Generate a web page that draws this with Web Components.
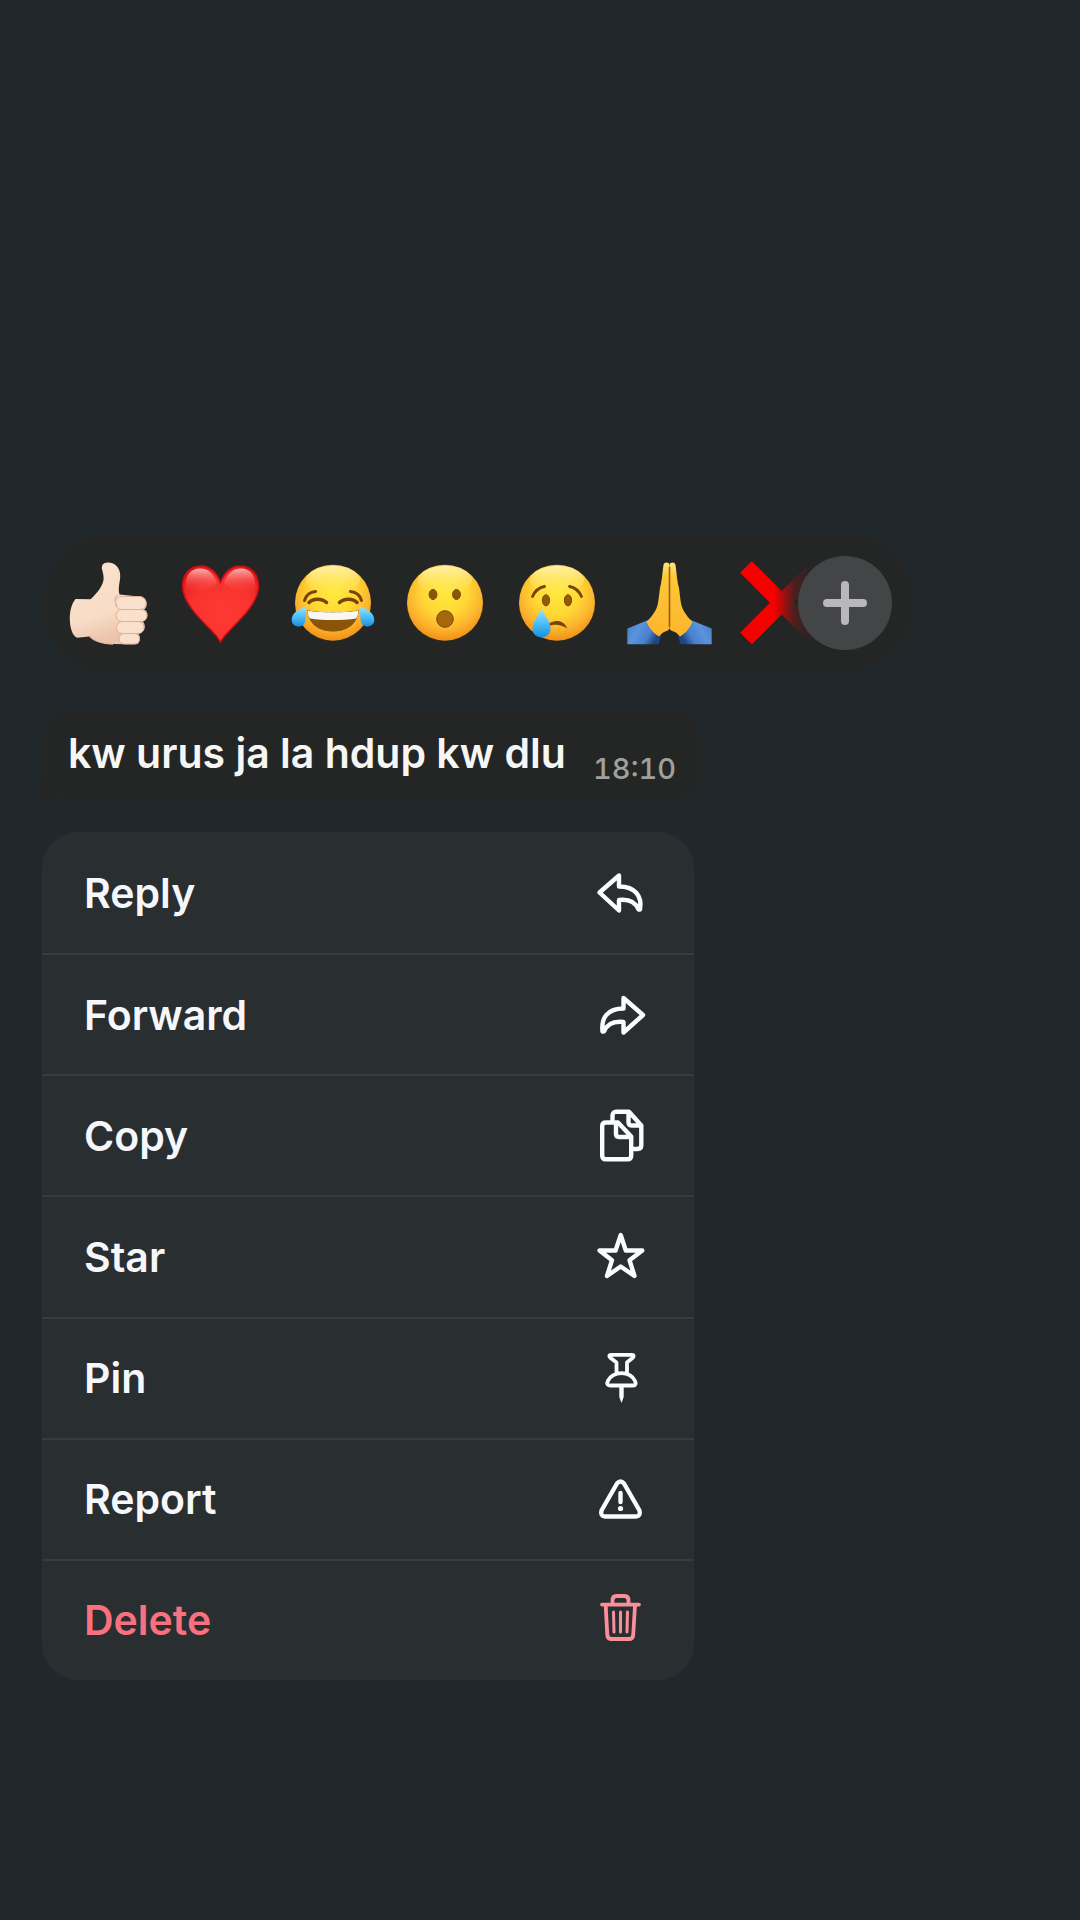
<!DOCTYPE html>
<html lang="ms">
<head>
<meta charset="utf-8">
<meta name="viewport" content="width=device-width">
<title>Message actions</title>
<style>
  html { background: #21282b; }
  body { margin: 0; min-height: 100vh; background: #21282b; font-family: Inter, "Noto Sans", sans-serif; }
</style>
</head>
<body>
<message-sheet>
  <reaction-bar></reaction-bar>
  <message-bubble time="18:10">kw urus ja la hdup kw dlu</message-bubble>
  <action-menu>
    <action-item icon="reply">Reply</action-item>
    <action-item icon="forward">Forward</action-item>
    <action-item icon="copy">Copy</action-item>
    <action-item icon="star">Star</action-item>
    <action-item icon="pin">Pin</action-item>
    <action-item icon="report">Report</action-item>
    <action-item icon="delete" danger>Delete</action-item>
  </action-menu>
</message-sheet>

<script>
const face = `
  <defs>
    <radialGradient id="g" cx=".5" cy=".36" r=".66">
      <stop offset="0" stop-color="#ffe93f"/><stop offset=".45" stop-color="#ffd836"/>
      <stop offset=".75" stop-color="#fcb32d"/><stop offset="1" stop-color="#ee8a12"/>
    </radialGradient>
    <linearGradient id="s" x1="0" y1="0" x2="0" y2="1">
      <stop offset="0" stop-color="#fffbd0" stop-opacity=".75"/><stop offset="1" stop-color="#fff27a" stop-opacity="0"/>
    </linearGradient>
    <linearGradient id="t" x1="0" y1="0" x2="0" y2="1">
      <stop offset="0" stop-color="#9fe3ff"/><stop offset=".5" stop-color="#4fc0fa"/><stop offset="1" stop-color="#1590e0"/>
    </linearGradient>
  </defs>
  <circle cx="43" cy="41.7" r="38" fill="url(#g)"/>
  <ellipse cx="43" cy="19" rx="27" ry="14" fill="url(#s)"/>`;

const EMOJI = {
  thumb: ["Thumbs up", `
    <defs><linearGradient id="k" x1="0" y1="0" x2=".3" y2="1">
      <stop offset="0" stop-color="#fbe3cf"/><stop offset=".7" stop-color="#f8dcc6"/><stop offset="1" stop-color="#eac3ab"/>
    </linearGradient></defs>
    <path fill="url(#k)" d="M42 1.500C37 1.500 35 4.500 36.200 9C37.500 14 38.500 18 36.500 22.500C34 29 29 34 24.500 38.300L9.500 38C5.500 43 3.700 50 3.800 58C4 67 6.500 75 11 76.700L23.500 75.500C29 80.500 37 83 47 83L62 83.300H70C74.500 83.300 75 75 72 72.500C79.500 72.500 80.500 63 76.500 60.500C82.500 59.500 83 50 78 48.500C82.500 46 81.500 36.500 75 35.800L53.500 33.500C51.500 27 54.500 20 54.200 14C54 6 48 1.500 42 1.500Z"/>
    <g fill="#fae1cd" stroke="#e0b198" stroke-width="1">
      <rect x="49.500" y="35.500" width="30.500" height="13.200" rx="6.500"/>
      <rect x="50" y="48.500" width="31" height="12" rx="6"/>
      <rect x="50.500" y="60.500" width="27.500" height="12" rx="6"/>
      <rect x="53" y="72.500" width="20.500" height="10.500" rx="5.200"/>
    </g>
    <path fill="none" stroke="#e5bca3" stroke-width="1.500" d="M24 75.500C28 80 36 82.500 47 83M52 34C48 36 48.500 42 51 45"/>`],
  heart: ["Love", `
    <defs><radialGradient id="h" cx=".52" cy=".62" r=".7">
      <stop offset="0" stop-color="#ff3a34"/><stop offset=".6" stop-color="#f8332f"/><stop offset="1" stop-color="#e0141a"/>
    </radialGradient>
    <linearGradient id="w" x1="0" y1="0" x2="0" y2="1"><stop offset="0" stop-color="#ffd9d6" stop-opacity=".8"/><stop offset=".6" stop-color="#ff6a63" stop-opacity=".4"/><stop offset="1" stop-color="#ff4a43" stop-opacity="0"/></linearGradient></defs>
    <path fill="url(#h)" stroke="#c80d14" stroke-width="1.500" d="M42.500 21.500C38 10 31 5 23 5C11 5 4.500 14 4.500 25C4.500 41 21 57 33 69C37 73 40.500 77.500 42.500 81C44.500 77.500 48 73 52 69C64 57 80.500 41 80.500 25C80.500 14 74 5 62 5C54 5 47 10 42.500 21.500Z"/>
    <path fill="url(#w)" d="M8 30C6 16 12 7.500 22 7.500C31 7.500 36 13 39 22C33 28 18 34 8 30ZM77 30C79 16 73 7.500 63 7.500C54 7.500 49 13 46 22C52 28 67 34 77 30Z"/>`],
  joy: ["Laugh", face + `
    <g fill="none" stroke="#774307" stroke-width="3" stroke-linecap="round">
      <path d="M14.500 39.500C16 34.500 20 31 25.500 30.500M60.500 30.500C66 31 70 34.500 71.500 39.500"/>
      <path stroke-width="3.500" d="M19 41.500C23 37 32 37 36.500 41.500M49.500 41.500C54 37 63 37 67 41.500"/>
    </g>
    <path fill="#8a5509" d="M17 49C26 52 60 52 69 49C68 62 58 70.500 43 70.500C28 70.500 18 62 17 49Z"/>
    <path fill="#f9f7f3" d="M17.500 49.500C27 52 59 52 68.500 49.500C68.500 53 67.500 56 66 57.500C53 59.500 33 59.500 20 57.500C18.500 56 17.500 53 17.500 49.500Z"/>
    <path fill="url(#t)" d="M17 45.500C8 48 1.500 52.500 1.700 59C2 67 13.500 68 15.200 60C16 56 15.500 50 17 45.500ZM69 45.500C78 48 84.500 52.500 84.300 59C84 67 72.500 68 70.800 60C70 56 70.500 50 69 45.500Z"/>`],
  wow: ["Surprised", face + `
    <g fill="#8a560c" stroke="#794808"><ellipse cx="31" cy="33.500" rx="3.900" ry="5"/><ellipse cx="54.500" cy="33.500" rx="3.900" ry="5"/>
    <circle cx="43" cy="58" r="8.300" fill="#a5670a"/></g>`],
  cry: ["Sad", face + `
    <g fill="#935a0b" stroke="#794808"><ellipse cx="32" cy="39.300" rx="3.600" ry="5.600"/><ellipse cx="54" cy="39.300" rx="3.600" ry="5.600"/></g>
    <path fill="none" stroke="#774307" stroke-width="2.800" stroke-linecap="round" d="M18.500 35.500C21 30 25 26.500 30.500 25.500M55.500 25.500C61 26.500 65 30 67.500 35.500"/>
    <path fill="#774307" d="M35 62.500C41 58.500 49.500 58.500 53.300 67.500C48 64 41 62.500 35 65Z"/>
    <path fill="url(#t)" d="M27.700 47C30 55 36.500 60 36.500 67.500C36.500 73 32.500 76.500 27.700 76.500C22.500 76.500 18.500 73 18.500 67.500C18.500 60 25 55 27.700 47Z"/>`],
  pray: ["Thanks", `
    <defs><linearGradient id="p" x1="0" y1="0" x2="0" y2="1"><stop offset="0" stop-color="#ffe27a"/><stop offset=".2" stop-color="#fdc838"/><stop offset="1" stop-color="#fdb52c"/></linearGradient>
    <linearGradient id="b" x1="0" y1="0" x2="1" y2=".4"><stop offset="0" stop-color="#4479c4"/><stop offset=".4" stop-color="#5b93dd"/><stop offset=".75" stop-color="#4a80cb"/><stop offset="1" stop-color="#1f4683"/></linearGradient>
    <g id="half"><path fill="url(#b)" d="M1.300 67.500L21 59.500L35 74.500L32.500 83.300H1.300Z"/>
    <path fill="url(#p)" d="M37.500 4C38 .8 43 .8 43.500 4V67C43 70 40 70 38 71C36 72 34.500 74 33 75.500C27 72 22.500 66 20.500 60.500C25 57 29 51 31 46C32.500 42 33 34 34 27C36 20 36.500 10 37.500 4Z"/></g></defs>
    <use href="#half"/><use href="#half" transform="matrix(-1 0 0 1 87 0)"/>
    <path stroke="#9b5a0c" stroke-width="1.600" d="M43.500 6V66"/>`],
  cross: ["Cross", `<path stroke="#f60000" stroke-width="16.500" d="M8 6L79.500 77.500M79.500 6L8 77.500"/>`]
};

const ICON = {
  reply: `<path d="M26 10.500L6.500 27.500L26 45.500V35C35 34 42.500 37 45.500 44.500H47C49.500 31 42 21.500 26 21.500Z"/>`,
  forward: `<path d="M30.500 11L50 28L30.500 45.500V35C21 34 14 37 11 44.500H9.500C8 31 14.500 21.500 30.500 21.500Z"/>`,
  copy: `<path d="M25 14.500H13C10.500 14.500 9.200 16 9.200 18V47.500C9.200 50 10.500 51.300 13 51.300H34.500C37 51.300 38.200 50 38.200 47.500V28.500ZM23 15V26C23 28 24 29 26 29H37.500M19.500 14V7.500C19.500 5 21 3.800 23 3.800H36L48.300 17.500V37C48.300 39.500 47 41 44.500 41H39M35.500 4V14C35.500 16.500 36.500 17.500 38.500 17.500H48"/>`,
  star: `<path d="M27.700 6L32.800 21.500H49.300L36.500 31.200L41.500 47L27.700 37.500L14 47L19 31.200L6.500 21.500H22.600Z"/>`,
  pin: `<path d="M18 4.800H39C41 4.800 41 6.500 40 7.500L34 12.500V23M23.500 23V12.500L17 7.500C16 6.500 16 4.800 18 4.800M17 35.500C14 35.500 13.800 33 14.800 31C17.500 26 22.500 23.200 28.500 23.200S39.500 26 42 31C43 33 43 35.500 40 35.500Z" stroke-width="3.800"/><path d="M26.300 36H30.700V47L28.500 53L26.300 47Z" fill="currentColor" stroke="none"/>`,
  report: `<path d="M24 12.500Q27.500 8.500 31 12.500L46.500 39.500Q48 45 43 45.500H12Q7 45 8.500 39.500Z"/><path d="M27.500 22V31"/><circle cx="27.500" cy="37.500" r="2.600" fill="currentColor" stroke="none"/>`,
  delete: `<g stroke-width="3.800"><path d="M9 12.600H46M19.500 12V8.500C19.500 5.500 21 4 23.500 4H31.500C34 4 35.500 5.500 35.500 8.500V12M12.700 13.500L14.300 43C14.500 45.500 16 47 18.500 47H36C38.500 47 40 45.500 40.200 43L42 13.500"/><path stroke-width="3" d="M20.500 20L21 40M27.500 20V40M34.500 20L34 40"/></g>`
};

function define(name, render) {
  customElements.define(name, class extends HTMLElement {
    connectedCallback() {
      if (this.shadowRoot) return;
      this.attachShadow({ mode: "open" }).innerHTML = render(this);
    }
  });
}

define("emoji-button", el => {
  const [label, art] = EMOJI[el.getAttribute("name")];
  return `<style>
    :host { display: block; flex: none; }
    button { display: block; margin: 0; padding: 0; border: 0; background: none; cursor: pointer; }
    svg { display: block; width: 84px; height: 84px; overflow: visible; }
  </style><button type="button" aria-label="${label}"><svg viewBox="0 0 84 84" aria-hidden="true">${art}</svg></button>`;
});

define("reaction-bar", () => `<style>
    :host { display: flex; align-items: center; box-sizing: border-box; width: 872px; max-width: 100%; min-height: 140px; padding: 0 22px 0 24px; border-radius: 70px; background: #242625; }
    .list { display: flex; flex: 1; gap: 28px; min-width: 0; overflow: hidden; mask-image: linear-gradient(to left, transparent 2px, rgba(0, 0, 0, .2) 18px, #000 38px); }
    .more { position: relative; flex: none; display: grid; place-items: center; width: 94px; height: 94px; margin: 0 0 0 -14px; padding: 0; border: 0; border-radius: 50%; background: #444547; color: #b8b8ba; cursor: pointer; }
  </style>
  <div class="list">${Object.keys(EMOJI).map(n => `<emoji-button name="${n}"></emoji-button>`).join("")}</div>
  <button class="more" type="button" aria-label="More reactions"><svg width="46" height="46" viewBox="0 0 46 46" aria-hidden="true"><path stroke="currentColor" stroke-width="8" stroke-linecap="round" d="M23 5V41M5 23H41"/></svg></button>`);

define("message-bubble", el => `<style>
    :host { position: relative; display: flex; align-items: flex-end; justify-content: space-between; box-sizing: border-box; width: 660px; max-width: 100%; min-height: 90px; padding: 16px 26px 12px; border-radius: 32px; background: #242625; }
    p { margin: 0; padding-bottom: 10px; color: #f6f6f5; font-size: 41px; line-height: 48px; font-weight: 600; }
    time { color: #a0a19f; font-size: 29px; line-height: 36px; font-weight: 500; font-variant-numeric: tabular-nums; }
    .tail { position: absolute; left: -10px; bottom: 0; fill: #242625; }
  </style>
  <svg class="tail" width="40" height="40" viewBox="0 0 40 40" aria-hidden="true"><path d="M10 0V18C10 28 7 35 0 39C12 41 24 39 32 36V0Z"/></svg>
  <p><slot></slot></p><time>${el.getAttribute("time")}</time>`);

define("action-item", el => `<style>
    :host { display: grid; color: #f5f7fa; }
    :host([danger]) { color: #f9707f; --icon: #fa8f9a; }
    :host(:not(:first-child)) { border-top: 2px solid #373c3f; }
    button { display: flex; align-items: center; justify-content: space-between; margin: 0; padding: 0 45px 0 42px; border: 0; background: none; color: inherit; font: 600 41px/48px Inter, "Noto Sans", sans-serif; text-align: left; cursor: pointer; }
    svg { flex: none; width: 56px; height: 56px; color: var(--icon, #fbfcfd); }
  </style>
  <button type="button"><span><slot></slot></span><svg viewBox="0 0 56 56" fill="none" stroke="currentColor" stroke-width="4.400" stroke-linecap="round" stroke-linejoin="round" aria-hidden="true">${ICON[el.getAttribute("icon")]}</svg></button>`);

define("action-menu", () => `<style>
    :host { display: grid; grid-auto-rows: 1fr; width: 652px; max-width: 100%; min-height: 848px; border-radius: 36px; overflow: hidden; background: #292e31; }
  </style><slot></slot>`);

define("message-sheet", () => `<style>
    :host { display: flex; flex-direction: column; align-items: flex-start; box-sizing: border-box; padding: 533px 42px 42px; }
    ::slotted(message-bubble) { margin: 36px 0 33px; }
  </style><slot></slot>`);
</script>
</body>
</html>
